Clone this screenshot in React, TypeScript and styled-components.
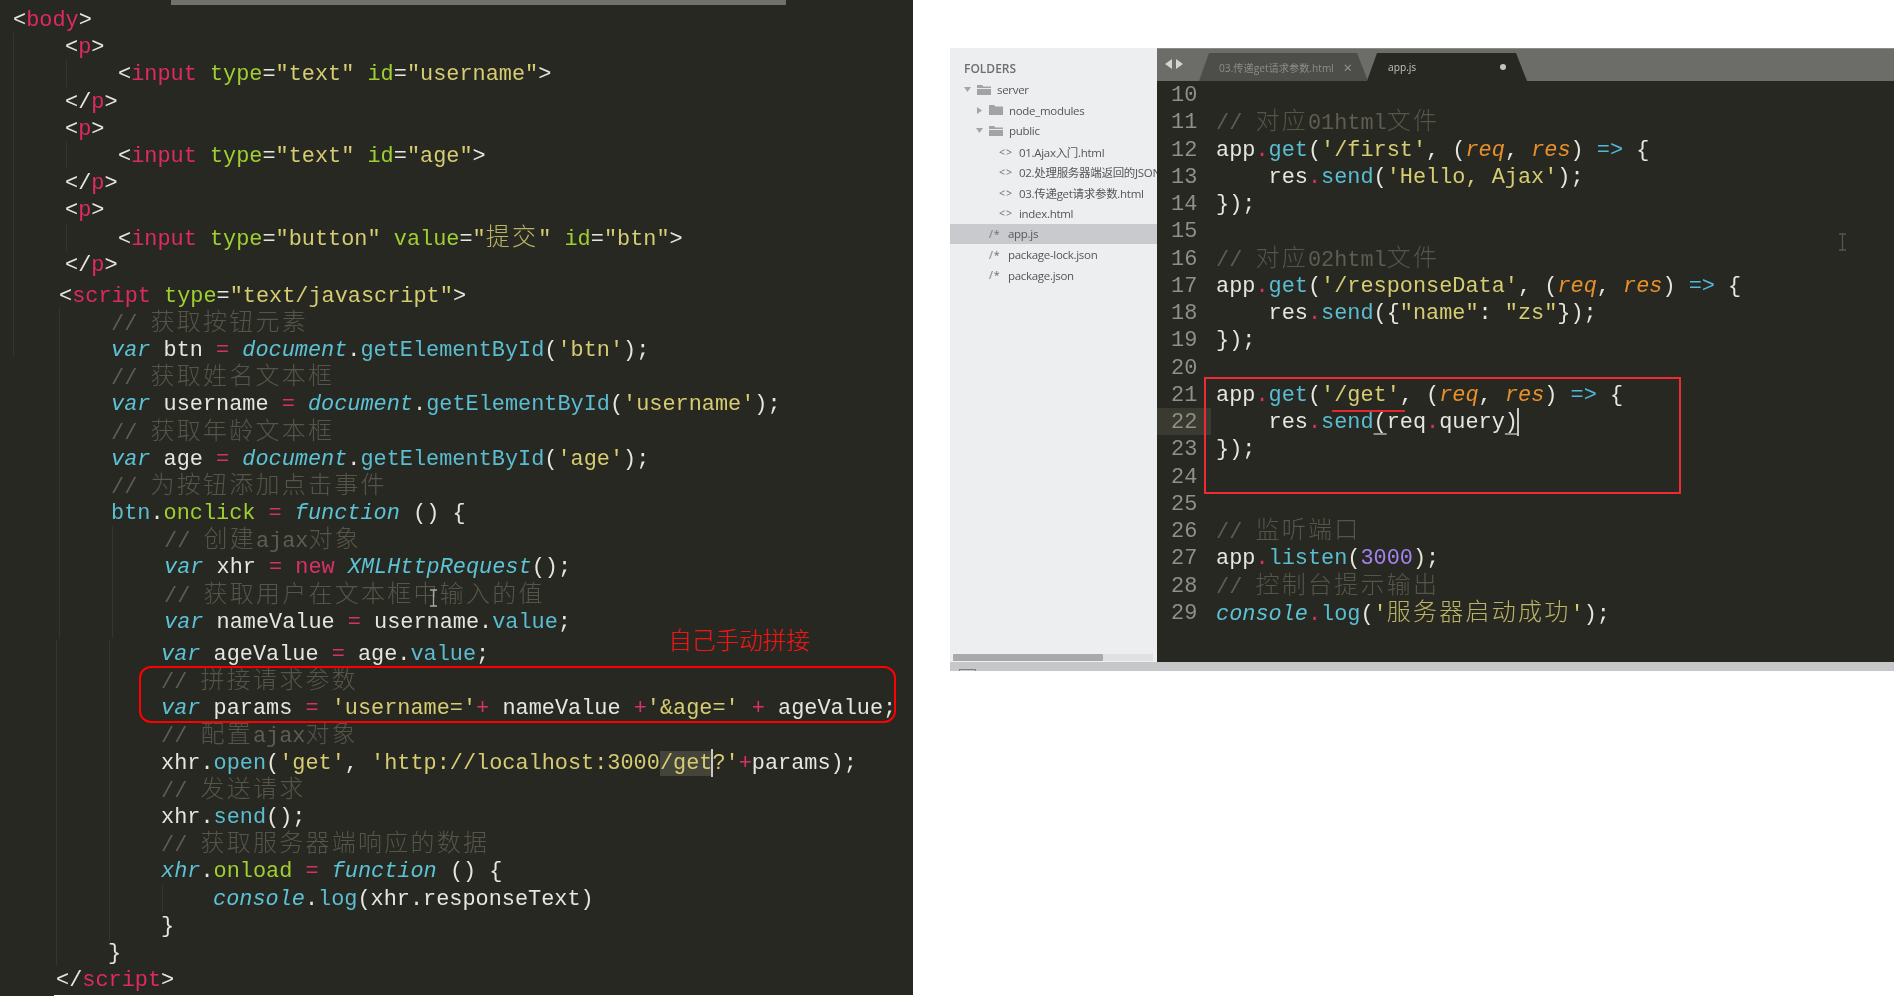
import React from 'react'
import styled, { createGlobalStyle } from 'styled-components'

type Tok = [string, string]
type Line = { x: number; gap?: number; toks: Tok[] }

const colors: Record<string, string> = {
  p: '#e6e6df',
  t: '#df2a60',
  a: '#9fd030',
  s: '#d6cc72',
  o: '#d8306a',
  k: '#5cc2d6',
  f: '#5abdd2',
  g: '#9fd030',
  c: '#5f5d51',
  n: '#a583ee',
  r: '#e8902a',
  d: '#d8306a',
  e: '#4fb9d6',
}

const GlobalStyle = createGlobalStyle`
  html, body {
    margin: 0;
    padding: 0;
    background: #fff;
    overflow: hidden;
  }
`

const Page = styled.div`
  position: relative;
  display: flex;
  width: 1894px;
  height: 996px;
  overflow: hidden;
  font-family: 'Liberation Mono', 'Noto Sans CJK SC', monospace;
`

const LeftPanel = styled.section`
  position: relative;
  display: flex;
  flex-direction: column;
  width: 913px;
  height: 996px;
  flex: none;
  background: #272822;
`

const TopBar = styled.div`
  width: 615px;
  height: 5px;
  margin-left: 171px;
  flex: none;
  background: #70706c;
`

const LeftCode = styled.div`
  padding-top: 1px;
  filter: blur(0.5px);
`

const BottomEdge = styled.div`
  height: 1px;
  margin: auto 0 0 54px;
  background: #fff;
`

const CodeRow = styled.div<{ $x: number; $gap?: number }>`
  height: 27.2px;
  line-height: 30px;
  padding-left: ${(p) => p.$x}px;
  margin-top: ${(p) => p.$gap || 0}px;
  font-size: 21.88px;
  white-space: pre;
`

const Token = styled.span<{ $kind: string }>`
  color: ${(p) => colors[p.$kind]};
  font-style: ${(p) => (p.$kind === 'k' || p.$kind === 'r' ? 'italic' : 'normal')};
`

const Cjk = styled.span`
  font-style: normal;
  font-weight: 300;
  font-size: 24px;
  letter-spacing: 2.26px;
  opacity: 0.85;
`

const Selected = styled.span`
  background: #45443a;
`

const Caret = styled.span`
  display: inline-block;
  width: 2px;
  height: 28px;
  margin: 0 -1px;
  vertical-align: top;
  background: #c9c9c3;
`

const Matched = styled.span`
  text-decoration: underline;
  text-decoration-color: #8f8f86;
  text-decoration-thickness: 1.5px;
  text-underline-offset: 5px;
`

const Guide = styled.div<{ $x: number; $y: number; $h: number }>`
  position: absolute;
  left: ${(p) => p.$x}px;
  top: ${(p) => p.$y}px;
  width: 1px;
  height: ${(p) => p.$h}px;
  background: #34352e;
`

const RightPanel = styled.section`
  flex: 1;
  min-width: 0;
  padding: 48px 0 0 37px;
`

const Window = styled.div`
  display: flex;
  flex-direction: column;
  height: 622.5px;
`

const Main = styled.div`
  display: flex;
  flex: 1;
  min-height: 0;
`

const Sidebar = styled.aside`
  display: flex;
  flex-direction: column;
  width: 207px;
  flex: none;
  overflow: hidden;
  background: #eceef0;
  font-family: 'Open Sans', 'Noto Sans CJK SC', sans-serif;
`

const SidebarTitle = styled.div`
  height: 16px;
  padding: 13px 0 2.5px 14px;
  line-height: 16px;
  font-size: 12px;
  font-weight: 600;
  color: #6e6f72;
  filter: blur(0.4px);
`

const TreeRow = styled.div<{ $pad: number; $active?: boolean }>`
  display: flex;
  align-items: center;
  height: 20.6px;
  padding-left: ${(p) => p.$pad}px;
  background: ${(p) => (p.$active ? '#c9cacd' : 'transparent')};
  font-size: 11.5px;
  letter-spacing: -0.3px;
  color: #55565a;
  white-space: nowrap;
`

const TreeLabel = styled.span`
  filter: blur(0.45px);
`

const Twist = styled.svg`
  width: 7px;
  height: 7px;
  margin-right: 5px;
  flex: none;
`

const FolderIcon = styled.svg`
  width: 16px;
  height: 12px;
  margin-right: 5px;
  flex: none;
  filter: blur(0.4px);
`

const FileGlyph = styled.span<{ $w: number }>`
  width: ${(p) => p.$w}px;
  flex: none;
  font-size: 10.5px;
  letter-spacing: 1px;
  color: #707174;
`

const ScrollTrack = styled.div`
  height: 7px;
  margin: auto 4px 1px 3px;
  background: #e0e1e3;
`

const ScrollThumb = styled.div`
  width: 150px;
  height: 7px;
  border-radius: 1px;
  background: #a9a9ab;
`

const Editor = styled.div`
  flex: 1;
  min-width: 0;
  background: #272822;
`

const TabBar = styled.div`
  display: flex;
  align-items: flex-end;
  height: 33px;
  border-top: 1px solid #8c8c88;
  box-sizing: border-box;
  background: #6c6c68;
`

const TabArrows = styled.svg`
  width: 26px;
  height: 12px;
  margin: 0 16px 11px 0;
  flex: none;
`

const Tab = styled.div<{ $w: number; $active?: boolean }>`
  display: flex;
  align-items: center;
  justify-content: space-between;
  box-sizing: border-box;
  width: ${(p) => p.$w}px;
  height: 28px;
  margin-right: -1px;
  padding: 0 ${(p) => (p.$active ? 21 : 16)}px 0 ${(p) => (p.$active ? 21 : 20)}px;
  clip-path: polygon(10px 0, calc(100% - 11px) 0, 100% 100%, 0 100%);
  background: ${(p) => (p.$active ? '#272822' : '#4d4d49')};
  font-family: 'Open Sans', 'Noto Sans CJK SC', sans-serif;
  font-size: 10.2px;
  color: ${(p) => (p.$active ? '#c4c4be' : '#8e8e88')};
  filter: blur(0.45px);
`

const TabClose = styled.span`
  font-size: 15px;
  line-height: 15px;
  color: #9a9a94;
`

const TabDot = styled.span`
  width: 6px;
  height: 6px;
  border-radius: 50%;
  background: #c4c4be;
`

const EditorRow = styled.div`
  display: flex;
  height: 27.25px;
  line-height: 30px;
  font-size: 21.88px;
  white-space: pre;
  filter: blur(0.5px);
`

const Gutter = styled.div<{ $active?: boolean }>`
  width: 40px;
  padding-left: 14px;
  flex: none;
  color: #8f908a;
  background: ${(p) => (p.$active ? '#3b3a30' : 'transparent')};
`

const LineCode = styled.div`
  padding-left: 5px;
`

const StatusBar = styled.div`
  height: 8.5px;
  padding-left: 9px;
  flex: none;
  overflow: hidden;
  background: #c6c7c9;
`

const StatusIcon = styled.div`
  width: 15px;
  height: 6px;
  margin-top: 7px;
  border: 1px solid #808183;
`

const RedBox = styled.div<{ $x: number; $y: number; $w: number; $h: number; $r?: number; $c: string }>`
  position: absolute;
  left: ${(p) => p.$x}px;
  top: ${(p) => p.$y}px;
  box-sizing: border-box;
  width: ${(p) => p.$w}px;
  height: ${(p) => p.$h}px;
  border: 2px solid ${(p) => p.$c};
  border-radius: ${(p) => p.$r || 0}px;
`

const RedLine = styled.div`
  position: absolute;
  left: 1332px;
  top: 409.5px;
  width: 73px;
  height: 2px;
  background: #e0282e;
`

const Note = styled.div`
  position: absolute;
  left: 668px;
  top: 621px;
  font-family: 'Noto Sans CJK SC', sans-serif;
  font-size: 23.6px;
  font-weight: 300;
  line-height: 36px;
  color: #f21414;
`

const Beam = styled.svg<{ $x: number; $y: number }>`
  position: absolute;
  left: ${(p) => p.$x}px;
  top: ${(p) => p.$y}px;
  width: 9px;
  height: 18px;
`

const leftLines: Line[] = [
  { x: 13, toks: [['p', '<'], ['t', 'body'], ['p', '>']] },
  { x: 65, toks: [['p', '<'], ['t', 'p'], ['p', '>']] },
  { x: 118, toks: [['p', '<'], ['t', 'input'], ['p', ' '], ['a', 'type'], ['p', '='], ['s', '"text"'], ['p', ' '], ['a', 'id'], ['p', '='], ['s', '"username"'], ['p', '>']] },
  { x: 65, toks: [['p', '</'], ['t', 'p'], ['p', '>']] },
  { x: 65, toks: [['p', '<'], ['t', 'p'], ['p', '>']] },
  { x: 118, toks: [['p', '<'], ['t', 'input'], ['p', ' '], ['a', 'type'], ['p', '='], ['s', '"text"'], ['p', ' '], ['a', 'id'], ['p', '='], ['s', '"age"'], ['p', '>']] },
  { x: 65, toks: [['p', '</'], ['t', 'p'], ['p', '>']] },
  { x: 65, toks: [['p', '<'], ['t', 'p'], ['p', '>']] },
  { x: 118, toks: [['p', '<'], ['t', 'input'], ['p', ' '], ['a', 'type'], ['p', '='], ['s', '"button"'], ['p', ' '], ['a', 'value'], ['p', '='], ['s', '"提交"'], ['p', ' '], ['a', 'id'], ['p', '='], ['s', '"btn"'], ['p', '>']] },
  { x: 65, toks: [['p', '</'], ['t', 'p'], ['p', '>']] },
  { x: 59, gap: 3.7, toks: [['p', '<'], ['t', 'script'], ['p', ' '], ['a', 'type'], ['p', '='], ['s', '"text/javascript"'], ['p', '>']] },
  { x: 111, toks: [['c', '// 获取按钮元素']] },
  { x: 111, toks: [['k', 'var'], ['p', ' btn '], ['o', '='], ['p', ' '], ['k', 'document'], ['p', '.'], ['f', 'getElementById'], ['p', '('], ['s', "'btn'"], ['p', ');']] },
  { x: 111, toks: [['c', '// 获取姓名文本框']] },
  { x: 111, toks: [['k', 'var'], ['p', ' username '], ['o', '='], ['p', ' '], ['k', 'document'], ['p', '.'], ['f', 'getElementById'], ['p', '('], ['s', "'username'"], ['p', ');']] },
  { x: 111, toks: [['c', '// 获取年龄文本框']] },
  { x: 111, toks: [['k', 'var'], ['p', ' age '], ['o', '='], ['p', ' '], ['k', 'document'], ['p', '.'], ['f', 'getElementById'], ['p', '('], ['s', "'age'"], ['p', ');']] },
  { x: 111, toks: [['c', '// 为按钮添加点击事件']] },
  { x: 111, toks: [['f', 'btn'], ['p', '.'], ['g', 'onclick'], ['p', ' '], ['o', '='], ['p', ' '], ['k', 'function'], ['p', ' () {']] },
  { x: 164, toks: [['c', '// 创建ajax对象']] },
  { x: 164, toks: [['k', 'var'], ['p', ' xhr '], ['o', '='], ['p', ' '], ['o', 'new'], ['p', ' '], ['k', 'XMLHttpRequest'], ['p', '();']] },
  { x: 164, toks: [['c', '// 获取用户在文本框中输入的值']] },
  { x: 164, toks: [['k', 'var'], ['p', ' nameValue '], ['o', '='], ['p', ' username.'], ['f', 'value'], ['p', ';']] },
  { x: 161, gap: 4.9, toks: [['k', 'var'], ['p', ' ageValue '], ['o', '='], ['p', ' age.'], ['f', 'value'], ['p', ';']] },
  { x: 161, toks: [['c', '// 拼接请求参数']] },
  { x: 161, toks: [['k', 'var'], ['p', ' params '], ['o', '='], ['p', ' '], ['s', "'username='"], ['o', '+'], ['p', ' nameValue '], ['o', '+'], ['s', "'&age='"], ['p', ' '], ['o', '+'], ['p', ' ageValue;']] },
  { x: 161, toks: [['c', '// 配置ajax对象']] },
  { x: 161, toks: [['p', 'xhr.'], ['f', 'open'], ['p', '('], ['s', "'get'"], ['p', ', '], ['s', "'http://localhost:3000"], ['S', '/get'], ['C', ''], ['s', "?'"], ['o', '+'], ['p', 'params);']] },
  { x: 161, toks: [['c', '// 发送请求']] },
  { x: 161, toks: [['p', 'xhr.'], ['f', 'send'], ['p', '();']] },
  { x: 161, toks: [['c', '// 获取服务器端响应的数据']] },
  { x: 161, toks: [['k', 'xhr'], ['p', '.'], ['g', 'onload'], ['p', ' '], ['o', '='], ['p', ' '], ['k', 'function'], ['p', ' () {']] },
  { x: 213, toks: [['k', 'console'], ['p', '.'], ['f', 'log'], ['p', '(xhr.responseText)']] },
  { x: 161, toks: [['p', '}']] },
  { x: 108, toks: [['p', '}']] },
  { x: 56, toks: [['p', '</'], ['t', 'script'], ['p', '>']] },
]

const rightLines: Tok[][] = [
  [],
  [['c', '// 对应01html文件']],
  [['p', 'app'], ['d', '.'], ['f', 'get'], ['p', '('], ['s', "'/first'"], ['p', ', ('], ['r', 'req'], ['p', ', '], ['r', 'res'], ['p', ') '], ['e', '=>'], ['p', ' {']],
  [['p', '    res'], ['d', '.'], ['f', 'send'], ['p', '('], ['s', "'Hello, Ajax'"], ['p', ');']],
  [['p', '});']],
  [],
  [['c', '// 对应02html文件']],
  [['p', 'app'], ['d', '.'], ['f', 'get'], ['p', '('], ['s', "'/responseData'"], ['p', ', ('], ['r', 'req'], ['p', ', '], ['r', 'res'], ['p', ') '], ['e', '=>'], ['p', ' {']],
  [['p', '    res'], ['d', '.'], ['f', 'send'], ['p', '({'], ['s', '"name"'], ['p', ': '], ['s', '"zs"'], ['p', '});']],
  [['p', '});']],
  [],
  [['p', 'app'], ['d', '.'], ['f', 'get'], ['p', '('], ['s', "'/get'"], ['p', ', ('], ['r', 'req'], ['p', ', '], ['r', 'res'], ['p', ') '], ['e', '=>'], ['p', ' {']],
  [['p', '    res'], ['d', '.'], ['f', 'send'], ['M', '('], ['p', 'req'], ['d', '.'], ['p', 'query'], ['M', ')'], ['C', '']],
  [['p', '});']],
  [],
  [],
  [['c', '// 监听端口']],
  [['p', 'app'], ['d', '.'], ['f', 'listen'], ['p', '('], ['n', '3000'], ['p', ');']],
  [['c', '// 控制台提示输出']],
  [['k', 'console'], ['d', '.'], ['f', 'log'], ['p', '('], ['s', "'服务器启动成功'"], ['p', ');']],
]

const splitCjk = (text: string) =>
  text.split(/([\u4e00-\u9fff]+)/).map((part, i) =>
    /[\u4e00-\u9fff]/.test(part) ? <Cjk key={i}>{part}</Cjk> : part
  )

const renderTokens = (toks: Tok[]) =>
  toks.map(([kind, text], i) => {
    if (kind === 'C') return <Caret key={i} />
    if (kind === 'S')
      return (
        <Selected key={i}>
          <Token $kind="s">{text}</Token>
        </Selected>
      )
    if (kind === 'M')
      return (
        <Matched key={i}>
          <Token $kind="p">{text}</Token>
        </Matched>
      )
    return (
      <Token key={i} $kind={kind}>
        {splitCjk(text)}
      </Token>
    )
  })

const Triangle = ({ open }: { open?: boolean }) => (
  <Twist viewBox="0 0 7 7">
    <path d={open ? 'M0 1h7L3.5 6z' : 'M1 0l5 3.5L1 7z'} fill="#a5a6a8" />
  </Twist>
)

const Folder = ({ open }: { open?: boolean }) => (
  <FolderIcon viewBox="0 0 16 12">
    <path d="M1 1h5l1.5 1.5H15V11H1z" fill="#a2a3a5" />
    {open && <path d="M1 4h14v1H1z" fill="#e8e9eb" />}
  </FolderIcon>
)

const files = ['01.Ajax入门.html', '02.处理服务器端返回的JSON数据.html', '03.传递get请求参数.html', 'index.html']

const IBeam = ({ x, y, color }: { x: number; y: number; color: string }) => (
  <Beam $x={x} $y={y} viewBox="0 0 9 18">
    <path d="M1 1h7M4.5 1v16M1 17h7" stroke={color} strokeWidth="1.3" fill="none" />
  </Beam>
)

export default function App() {
  return (
    <Page>
      <GlobalStyle />
      <LeftPanel>
        <TopBar />
        <LeftCode>
          {leftLines.map((line, i) => (
            <CodeRow key={i} $x={line.x} $gap={line.gap}>
              {renderTokens(line.toks)}
            </CodeRow>
          ))}
        </LeftCode>
        <BottomEdge />
        <Guide $x={13} $y={33} $h={324} />
        <Guide $x={66} $y={60} $h={27} />
        <Guide $x={66} $y={142} $h={27} />
        <Guide $x={66} $y={224} $h={27} />
        <Guide $x={59} $y={308} $h={330} />
        <Guide $x={56} $y={640} $h={326} />
        <Guide $x={112} $y={526} $h={112} />
        <Guide $x={109} $y={640} $h={300} />
        <Guide $x={162} $y={885} $h={27} />
      </LeftPanel>

      <RightPanel>
        <Window>
          <Main>
            <Sidebar>
              <SidebarTitle>FOLDERS</SidebarTitle>
              <TreeRow $pad={14}>
                <Triangle open />
                <Folder open />
                <TreeLabel>server</TreeLabel>
              </TreeRow>
              <TreeRow $pad={26}>
                <Triangle />
                <Folder />
                <TreeLabel>node_modules</TreeLabel>
              </TreeRow>
              <TreeRow $pad={26}>
                <Triangle open />
                <Folder open />
                <TreeLabel>public</TreeLabel>
              </TreeRow>
              {files.map((name) => (
                <TreeRow key={name} $pad={49}>
                  <FileGlyph $w={20}>{'<>'}</FileGlyph>
                  <TreeLabel>{name}</TreeLabel>
                </TreeRow>
              ))}
              <TreeRow $pad={39} $active>
                <FileGlyph $w={19}>/*</FileGlyph>
                <TreeLabel>app.js</TreeLabel>
              </TreeRow>
              <TreeRow $pad={39}>
                <FileGlyph $w={19}>/*</FileGlyph>
                <TreeLabel>package-lock.json</TreeLabel>
              </TreeRow>
              <TreeRow $pad={39}>
                <FileGlyph $w={19}>/*</FileGlyph>
                <TreeLabel>package.json</TreeLabel>
              </TreeRow>
              <ScrollTrack>
                <ScrollThumb />
              </ScrollTrack>
            </Sidebar>
            <Editor>
              <TabBar>
                <TabArrows viewBox="0 0 26 12">
                  <path d="M15 1v10L8 6zM19 1l7 5-7 5z" fill="#d4d4d0" />
                </TabArrows>
                <Tab $w={169}>
                  <span>03.传递get请求参数.html</span>
                  <TabClose>×</TabClose>
                </Tab>
                <Tab $w={160} $active>
                  <span>app.js</span>
                  <TabDot />
                </Tab>
              </TabBar>
              {rightLines.map((toks, i) => (
                <EditorRow key={i}>
                  <Gutter $active={i === 12}>{i + 10}</Gutter>
                  <LineCode>{renderTokens(toks)}</LineCode>
                </EditorRow>
              ))}
            </Editor>
          </Main>
          <StatusBar>
            <StatusIcon />
          </StatusBar>
        </Window>
      </RightPanel>

      <RedBox $x={139} $y={666} $w={757} $h={57} $r={12} $c="#f00" />
      <Note>自己手动拼接</Note>
      <RedBox $x={1204} $y={377} $w={477} $h={117} $c="#ee2a32" />
      <RedLine />
      <IBeam x={429} y={589} color="#a8a8a2" />
      <IBeam x={1838} y={233} color="#555" />
    </Page>
  )
}
